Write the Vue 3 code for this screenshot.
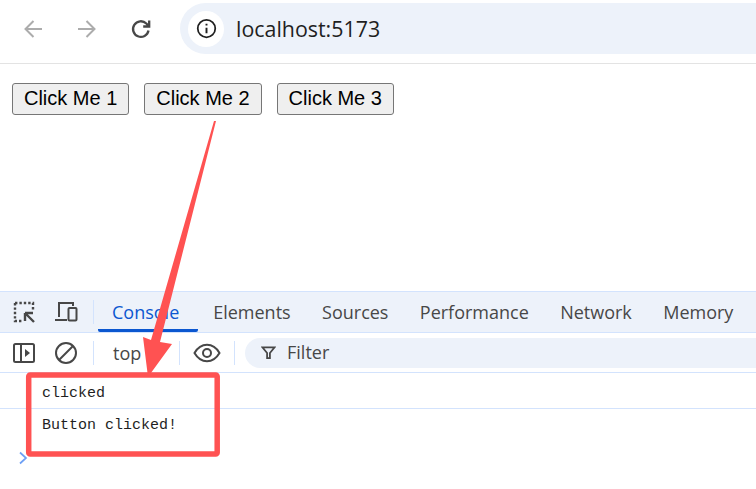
<script setup>
const buttons = ['Click Me 1', 'Click Me 2', 'Click Me 3']
const tabs = ['Elements', 'Sources', 'Performance', 'Network', 'Memory']
</script>

<template>
  <div class="page">
    <header class="browser-bar">
      <div class="nav">
        <svg class="nav-icon" viewBox="0 0 24 24"><path d="M21 12H4.500M12.500 4l-8 8 8 8" fill="none" stroke="#acacac" stroke-width="2"/></svg>
        <svg class="nav-icon" viewBox="0 0 24 24"><path d="M3 12h16.500M11.500 4l8 8-8 8" fill="none" stroke="#acacac" stroke-width="2"/></svg>
        <svg class="nav-icon" viewBox="0 0 24 24"><path d="M19.500 13.500a7.800 7.800 0 1 1-2.200-7L20.200 9.400M20.200 3.500v6h-6" fill="none" stroke="#474747" stroke-width="2.300"/></svg>
      </div>
      <div class="address">
        <span class="site-info">
          <svg viewBox="0 0 24 24" width="21" height="21"><circle cx="12" cy="12" r="10" fill="none" stroke="#1f1f1f" stroke-width="2"/><path d="M12 11v6.500M12 6.500v2.200" fill="none" stroke="#1f1f1f" stroke-width="2.200"/></svg>
        </span>
        <span class="url">localhost:5173</span>
      </div>
    </header>

    <main class="content">
      <button v-for="b in buttons" :key="b" class="demo-btn">{{ b }}</button>
    </main>

    <section class="devtools">
      <div class="tabs">
        <svg class="tool first" viewBox="0 0 24 24"><path d="M3 3h18v8M3 3v18h8" fill="none" stroke="#474747" stroke-width="2.400" stroke-dasharray="2.400 2"/><path d="M13 13h8M13 13v8M13 13l9 9" fill="none" stroke="#474747" stroke-width="2.400"/></svg>
        <svg class="tool" viewBox="0 0 24 24"><path d="M5 17V3h14v3M1 20h12" fill="none" stroke="#474747" stroke-width="2"/><rect x="14.500" y="8" width="8" height="12.500" rx="1" fill="none" stroke="#474747" stroke-width="2"/></svg>
        <span class="divider tab-divider"></span>
        <span class="tab active">Console</span>
        <span v-for="t in tabs" :key="t" class="tab">{{ t }}</span>
      </div>
      <div class="filter-row">
        <svg class="tool first" viewBox="0 0 24 24"><rect x="2" y="3" width="20" height="18" rx="1.500" fill="none" stroke="#474747" stroke-width="2"/><path d="M9 3v18" stroke="#474747" stroke-width="2"/><path d="M13 8l5 4-5 4z" fill="#474747"/></svg>
        <svg class="tool clear" viewBox="0 0 24 24"><circle cx="12" cy="12" r="10" fill="none" stroke="#474747" stroke-width="2"/><path d="M5 19L19 5" stroke="#474747" stroke-width="2"/></svg>
        <span class="divider top-divider"></span>
        <span class="context">top</span>
        <span class="divider"></span>
        <svg class="eye" viewBox="0 0 28 20"><path d="M1.500 10C5 4 9 1.800 14 1.800S23 4 26.500 10C23 16 19 18.200 14 18.200S5 16 1.500 10z" fill="none" stroke="#474747" stroke-width="2"/><circle cx="14" cy="10" r="4" fill="none" stroke="#474747" stroke-width="2"/></svg>
        <span class="divider eye-divider"></span>
        <div class="filter">
          <svg viewBox="0 0 16 16" width="15" height="15"><path d="M1.500 2.500h13L9.500 8.500V14h-3V8.500z" fill="none" stroke="#474747" stroke-width="1.900"/></svg>
          <span class="filter-label">Filter</span>
        </div>
      </div>
      <div class="log">clicked</div>
      <div class="log second">Button clicked!</div>
      <svg class="prompt" viewBox="0 0 10 14"><path d="M2 1.500L8 7l-6 5.500" fill="none" stroke="#6ea0f5" stroke-width="1.700"/></svg>
    </section>

    <svg class="annotation" viewBox="0 0 756 489" width="756" height="489">
      <polygon points="216,121 160,342 172,344 148,377 143,337 151,340 214,121" fill="#ff5252"/>
      <rect x="28.700" y="375" width="188.500" height="79" rx="1.500" fill="none" stroke="#ff5252" stroke-width="5.500"/>
    </svg>
  </div>
</template>

<style scoped>
.page {
  position: relative;
  width: 756px;
  height: 489px;
  overflow: hidden;
  background: #fff;
  display: flex;
  flex-direction: column;
  font-family: "Open Sans", "Noto Sans", sans-serif;
}
.browser-bar {
  height: 63px;
  flex: none;
  border-bottom: 1px solid #e3e3e3;
  display: flex;
  align-items: flex-start;
  padding-left: 21px;
}
.nav {
  display: flex;
  gap: 30px;
  padding-top: 17px;
  width: 159px;
}
.nav-icon {
  width: 24px;
  height: 24px;
}
.address {
  flex: 1;
  height: 51px;
  margin-top: 3px;
  background: #edf2fa;
  border-radius: 26px 0 0 26px;
  display: flex;
  align-items: center;
  padding-left: 8px;
}
.site-info {
  width: 36px;
  height: 36px;
  border-radius: 50%;
  background: #fff;
  display: flex;
  align-items: center;
  justify-content: center;
}
.url {
  margin-left: 12px;
  font-size: 21.400px;
  color: #1f1f1f;
}
.content {
  height: 208px;
  flex: none;
  padding: 19px 0 0 12px;
  display: flex;
  align-items: flex-start;
  gap: 15px;
}
.demo-btn {
  box-sizing: border-box;
  width: 117.300px;
  height: 32px;
  padding: 0 0 2px;
  border: 1px solid #767676;
  border-radius: 3px;
  background: #efefef;
  color: #000;
  font-family: "Liberation Sans", Arial, sans-serif;
  font-size: 20px;
}
.devtools {
  flex: 1;
  border-top: 1px solid #d3e3fd;
  display: flex;
  flex-direction: column;
}
.tabs {
  height: 40px;
  flex: none;
  background: #edf2fa;
  border-bottom: 1px solid #d3e3fd;
  display: flex;
  align-items: center;
  color: #474747;
  font-size: 18px;
}
.tool {
  width: 24px;
  height: 24px;
  flex: none;
}
.tool.first {
  margin-left: 12px;
}
.tabs .tool + .tool {
  margin-left: 18px;
}
.divider {
  width: 1px;
  height: 24px;
  background: #d3e3fd;
  flex: none;
}
.tab-divider {
  margin: 0 4px 0 15px;
}
.tab {
  height: 40px;
  line-height: 40px;
  box-sizing: border-box;
  padding: 0 15.700px;
  white-space: nowrap;
}
.tab.active {
  width: 99.500px;
  padding-left: 14px;
  color: #0b57d0;
  border-bottom: 3px solid #0b57d0;
  border-radius: 0 0 2px 2px;
}
.filter-row {
  height: 39px;
  flex: none;
  border-bottom: 1px solid #d3e3fd;
  display: flex;
  align-items: center;
  color: #474747;
  font-size: 18px;
}
.tool.clear {
  margin-left: 18px;
}
.top-divider {
  margin-left: 15px;
}
.context {
  margin-left: 19px;
  width: 66px;
}
.eye {
  width: 28px;
  height: 20px;
  margin-left: 13px;
  flex: none;
}
.eye-divider {
  margin: 0 10px 0 13px;
}
.filter {
  flex: 1;
  height: 30px;
  background: #edf2fa;
  border-radius: 15px 0 0 15px;
  display: flex;
  align-items: center;
  gap: 11px;
  padding-left: 16px;
}
.filter-label {
  line-height: 28px;
  height: 30px;
}
.log {
  height: 35px;
  flex: none;
  line-height: 41px;
  font-family: "Liberation Mono", monospace;
  font-size: 15px;
  color: #1f1f1f;
  border-bottom: 1px solid #d3e3fd;
  padding-left: 42px;
}
.log.second {
  border-bottom: 0;
  height: 32px;
  line-height: 34px;
}
.prompt {
  width: 10px;
  height: 14px;
  margin: 10px 0 0 18px;
}
.annotation {
  position: absolute;
  left: 0;
  top: 0;
  pointer-events: none;
}
</style>
